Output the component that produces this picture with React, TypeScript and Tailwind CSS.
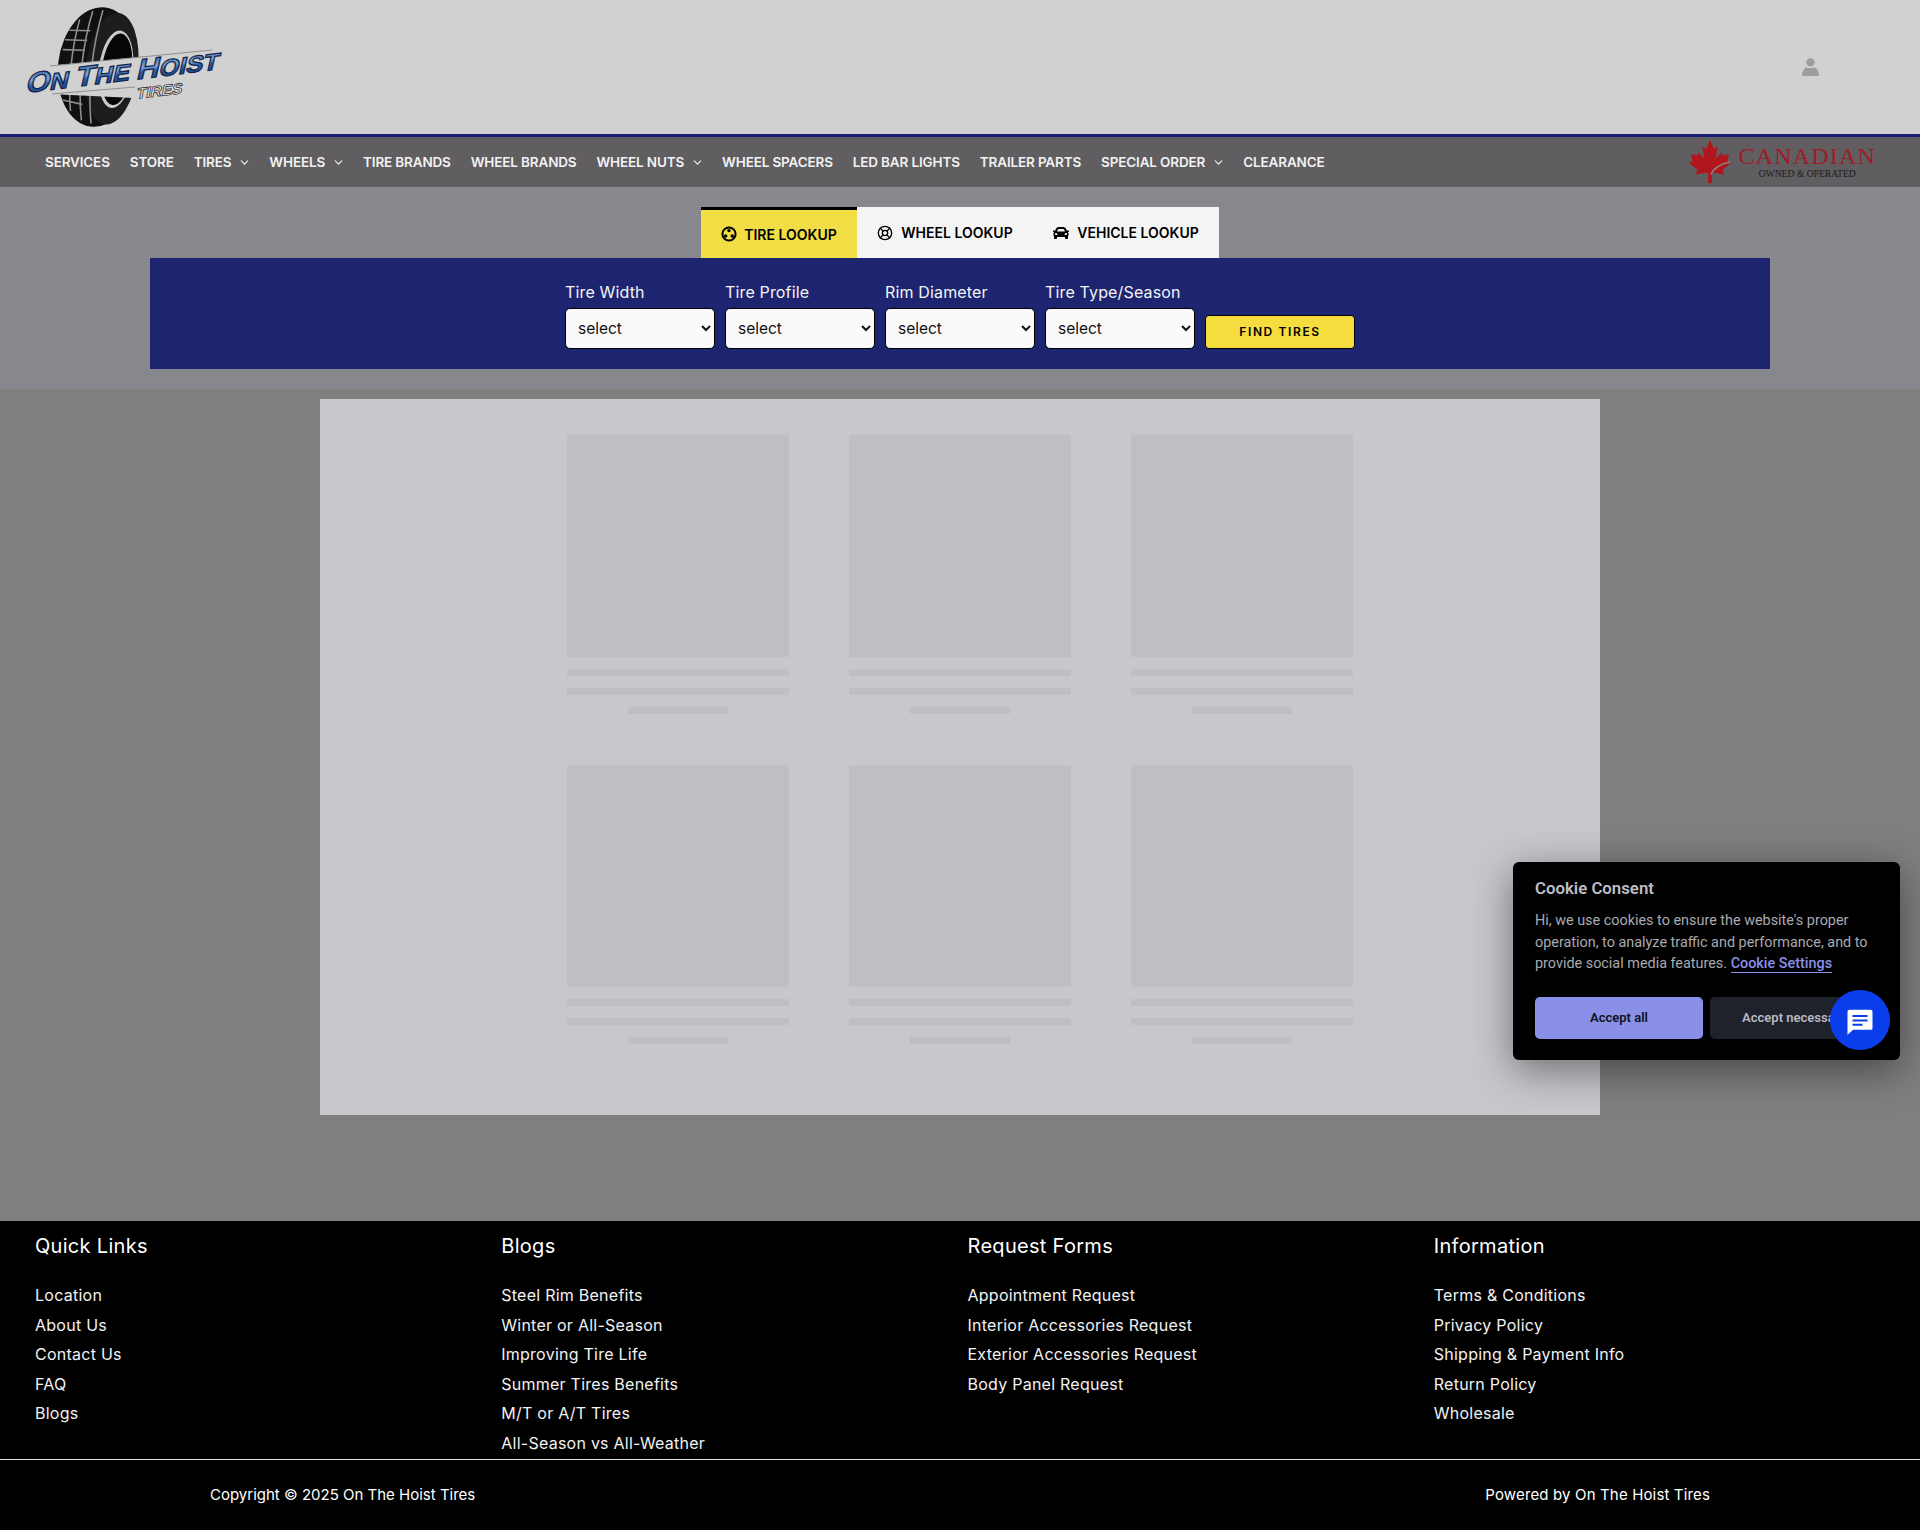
import { ChevronDown, LifeBuoy } from 'lucide-react';
import { FaCar } from 'react-icons/fa';

const navItems = [
  { label: 'SERVICES' },
  { label: 'STORE' },
  { label: 'TIRES', caret: true },
  { label: 'WHEELS', caret: true },
  { label: 'TIRE BRANDS' },
  { label: 'WHEEL BRANDS' },
  { label: 'WHEEL NUTS', caret: true },
  { label: 'WHEEL SPACERS' },
  { label: 'LED BAR LIGHTS' },
  { label: 'TRAILER PARTS' },
  { label: 'SPECIAL ORDER', caret: true },
  { label: 'CLEARANCE' },
];

const filters = ['Tire Width', 'Tire Profile', 'Rim Diameter', 'Tire Type/Season'];

const footerCols = [
  { title: 'Quick Links', links: ['Location', 'About Us', 'Contact Us', 'FAQ', 'Blogs'] },
  {
    title: 'Blogs',
    links: ['Steel Rim Benefits', 'Winter or All-Season', 'Improving Tire Life', 'Summer Tires Benefits', 'M/T or A/T Tires', 'All-Season vs All-Weather'],
  },
  { title: 'Request Forms', links: ['Appointment Request', 'Interior Accessories Request', 'Exterior Accessories Request', 'Body Panel Request'] },
  { title: 'Information', links: ['Terms & Conditions', 'Privacy Policy', 'Shipping & Payment Info', 'Return Policy', 'Wholesale'] },
];

function TireLogo() {
  return (
    <svg width="210" height="134" viewBox="0 0 210 134" className="block">
      <defs>
        <linearGradient id="chrome" x1="0" y1="0" x2="0" y2="1">
          <stop offset="0" stopColor="#1f4a8c" />
          <stop offset="0.45" stopColor="#7fa6d8" />
          <stop offset="0.6" stopColor="#2d5da4" />
          <stop offset="1" stopColor="#1b3f7c" />
        </linearGradient>
      </defs>
      {/* tire */}
      <g transform="rotate(7 78 67)">
        <ellipse cx="78" cy="67" rx="40" ry="60" fill="#101010" />
        <ellipse cx="92" cy="67" rx="26" ry="56" fill="#1d1d1d" />
        <ellipse cx="96" cy="67" rx="17" ry="39" fill="#c9c9c9" />
        <ellipse cx="97" cy="67" rx="15" ry="36" fill="#060606" />
        <g stroke="#8d8d8d" strokeWidth="1.6" fill="none">
          <path d="M45 34 L66 32" />
          <path d="M42 44 L64 42" />
          <path d="M41 54 L63 52" />
          <path d="M41 84 L63 86" />
          <path d="M43 94 L64 96" />
          <path d="M47 104 L67 106" />
          <path d="M54 22 C50 50 50 84 56 114" />
          <path d="M66 12 C60 46 60 88 68 122" />
          <path d="M76 10 C70 46 70 88 78 124" />
        </g>
      </g>
      {/* band behind the lettering */}
      <path d="M28 66 L192 50 L202 78 L118 86 L114 98 L30 94 Z" fill="#d1d1d1" />
      <path d="M30 66 L192 50" stroke="#8f8f8f" strokeWidth="1" />
      <path d="M32 94 L115 87" stroke="#8f8f8f" strokeWidth="1" />
      <text
        transform="translate(5 93) rotate(-7) skewX(-20)"
        textLength="194"
        lengthAdjust="spacingAndGlyphs"
        fontFamily="Liberation Sans, sans-serif"
        fontWeight="700"
        fontSize="23"
        fill="url(#chrome)"
        stroke="#12264f"
        strokeWidth="1.2"
      >
        <tspan fontSize="28">O</tspan>N <tspan fontSize="28">T</tspan>HE <tspan fontSize="28">H</tspan>OIST
      </text>
      <text
        transform="translate(116 99) rotate(-7) skewX(-18)"
        textLength="46"
        lengthAdjust="spacingAndGlyphs"
        fontFamily="Liberation Sans, sans-serif"
        fontWeight="700"
        fontSize="15"
        fill="#e4e4e4"
        stroke="#1a1a1a"
        strokeWidth="0.7"
      >
        TIRES
      </text>
    </svg>
  );
}

function TireIcon() {
  return (
    <svg width="16" height="16" viewBox="0 0 16 16">
      <circle cx="8" cy="8" r="6.6" fill="none" stroke="#000" strokeWidth="2" />
      <circle cx="8" cy="4.6" r="1.7" />
      <circle cx="4.7" cy="10" r="1.7" />
      <circle cx="11.3" cy="10" r="1.7" />
    </svg>
  );
}

function UserIcon() {
  return (
    <svg width="17" height="18" viewBox="0 0 17 18" fill="#9c9da1">
      <circle cx="8.5" cy="4.4" r="4.2" />
      <path d="M4.5 9.5 C5.5 10.3 11.5 10.3 12.5 9.5 C14.8 10.2 16.6 12.5 17 18 L0 18 C0.4 12.5 2.2 10.2 4.5 9.5 Z" />
    </svg>
  );
}

function CanadianBadge() {
  return (
    <div className="flex items-center">
      <svg width="44" height="44" viewBox="0 0 46 46">
        <path
          d="M21 45 L21 34 L8 36 L10 31 L1 24 L5 22 L3 15 L10 16 L11 13 L17 19 L15 7 L19 9 L23 0 L27 9 L31 7 L29 19 L35 13 L36 16 L43 15 L41 22 L45 24 L36 31 L38 36 L25 34 L25 45 Z"
          fill="#b2161d"
        />
        <path d="M24 36 C27 29 34 25 44 23" fill="none" stroke="#8c8a8a" strokeWidth="1.5" />
      </svg>
      <div className="ml-[6px] flex flex-col items-center gap-[1px]">
        <span className="font-['Liberation_Serif',serif] text-[24px] leading-[23px] tracking-[1.2px] text-[#9e1c26]">CANADIAN</span>
        <span className="font-['Liberation_Serif',serif] text-[9.6px] leading-[10px] text-[#1c1c1c]">OWNED &amp; OPERATED</span>
      </div>
    </div>
  );
}

function SkeletonCard() {
  return (
    <div className="flex w-[222px] flex-col items-center">
      <div className="h-[222px] w-full bg-[#bfbec3]" />
      <div className="mt-[12px] h-[7px] w-full bg-[#bfbec3]" />
      <div className="mt-[12px] h-[7px] w-full bg-[#bfbec3]" />
      <div className="mt-[12px] h-[7px] w-[100px] bg-[#bfbec3]" />
    </div>
  );
}

export default function App() {
  return (
    <div className="relative h-[1530px] w-full overflow-hidden bg-[#7f7f7f] font-['Inter',sans-serif]">
      {/* Header */}
      <header className="flex h-[134px] items-center justify-between bg-[#d1d1d1] pl-[20px] pr-[101px]">
        <TireLogo />
        <UserIcon />
      </header>

      {/* Nav */}
      <nav className="flex h-[53px] items-center justify-between border-t-[3px] border-[#1d1f72] bg-[#605e60] pl-[45px] pr-[44px]">
        <ul className="flex items-center gap-[20px]">
          {navItems.map((item) => (
            <li key={item.label} className="flex items-center text-[13.5px] font-semibold tracking-[-0.15px] text-[#f2f2f2]">
              {item.label}
              {item.caret && <ChevronDown size={13} className="ml-[7px] -mr-[2px]" />}
            </li>
          ))}
        </ul>
        <CanadianBadge />
      </nav>

      {/* Lookup */}
      <section className="flex h-[202px] flex-col items-center bg-[#87888d] pt-[20px]">
        <div className="flex h-[51px] items-stretch bg-[#f4f4f4] text-[14px] font-semibold text-black">
          <div className="flex w-[156px] items-center justify-center gap-[7px] border-t-[3px] border-black bg-[#f0de44]">
            <TireIcon />
            TIRE LOOKUP
          </div>
          <div className="flex w-[176px] items-center justify-center gap-[8px]">
            <LifeBuoy size={16} />
            WHEEL LOOKUP
          </div>
          <div className="flex w-[186px] items-center justify-center gap-[8px]">
            <FaCar size={16} />
            VEHICLE LOOKUP
          </div>
        </div>
        <div className="flex h-[111px] w-[1620px] items-end justify-center gap-[10px] bg-[#1d2570] pb-[20px]">
          {filters.map((label) => (
            <div key={label} className="flex w-[150px] flex-col">
              <label className="mb-[4px] text-[16px] leading-[24px] tracking-[0.15px] text-[#f4f4f4]">{label}</label>
              <select className="h-[41px] w-full rounded-[5px] border border-black bg-[#fafafa] pl-[8px] text-[15.5px] text-[#111]">
                <option>select</option>
              </select>
            </div>
          ))}
          <button className="h-[34px] w-[150px] rounded-[4px] border border-black bg-[#f5dc3f] text-[12px] font-semibold tracking-[1.6px] text-black">
            FIND TIRES
          </button>
        </div>
      </section>

      {/* Loading results */}
      <main className="mx-auto mt-[10px] grid h-[716px] w-[1280px] grid-cols-[222px_222px_222px] content-start justify-center gap-x-[60px] gap-y-[51px] bg-[#c8c7cc] pt-[36px]">
        {[1, 2, 3, 4, 5, 6].map((n) => (
          <SkeletonCard key={n} />
        ))}
      </main>

      {/* Footer */}
      <footer className="absolute bottom-0 left-0 h-[309px] w-full bg-black text-white">
        <div className="grid h-[238px] grid-cols-4 pl-[35px] pr-[20px] pt-[11px]">
          {footerCols.map((col) => (
            <div key={col.title}>
              <h4 className="mb-[23px] text-[20px] leading-[28px] tracking-[0.3px]">{col.title}</h4>
              <ul className="flex flex-col gap-[5.5px]">
                {col.links.map((link) => (
                  <li key={link} className="text-[16px] leading-[24px] tracking-[0.25px] text-[#f2f2f2]">
                    {link}
                  </li>
                ))}
              </ul>
            </div>
          ))}
        </div>
        <div className="flex h-[71px] items-center justify-between border-t border-[#e5e5e5] px-[210px] text-[15px]">
          <span>Copyright © 2025 On The Hoist Tires</span>
          <span className="tracking-[0.15px]">Powered by On The Hoist Tires</span>
        </div>
      </footer>

      {/* Cookie consent */}
      <div className="absolute left-[1513px] top-[862px] h-[198px] w-[387px] rounded-[6px] bg-black px-[22px] pt-[16px] font-['Roboto',sans-serif] shadow-[0_10px_40px_rgba(0,0,0,0.45)]">
        <h5 className="text-[16.8px] font-semibold leading-[20px] text-[#bdbec5]">Cookie Consent</h5>
        <p className="mt-[12px] text-[14.4px] leading-[21.5px] text-[#a9aab1]">
          Hi, we use cookies to ensure the website's proper operation, to analyze traffic and performance, and to provide social media features.{' '}
          <span className="border-b border-[#8a90e8] font-medium text-[#8a90e8]">Cookie Settings</span>
        </p>
        <div className="mt-[22px] flex gap-[7px]">
          <button className="h-[42px] w-[168px] rounded-[5px] bg-[#8a90e8] text-[13px] font-semibold text-[#0f1020]">Accept all</button>
          <button className="h-[42px] w-[168px] rounded-[5px] bg-[#1f222b] text-[13px] font-semibold text-[#b8b9c0]">Accept necessary</button>
        </div>
      </div>

      {/* Chat bubble */}
      <button className="absolute left-[1830px] top-[990px] flex h-[60px] w-[60px] items-center justify-center rounded-full bg-[#0a3eea]">
        <svg width="30" height="30" viewBox="0 0 24 24" className="mt-[1px]">
          <path d="M3.5 3h17a1.5 1.5 0 0 1 1.5 1.5v13a1.5 1.5 0 0 1-1.5 1.5H6.5L2 23V4.5A1.5 1.5 0 0 1 3.5 3z" fill="#fff" />
          <path d="M6 8h12M6 11.5h12M6 15h8" stroke="#0a3eea" strokeWidth="1.6" />
        </svg>
      </button>
    </div>
  );
}
